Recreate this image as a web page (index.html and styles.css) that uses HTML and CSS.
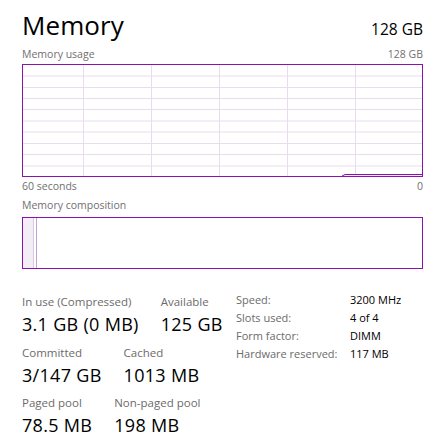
FILE: index.html
```html
<!DOCTYPE html>
<html>
<head>
<meta charset="utf-8">
<link rel="stylesheet" href="styles.css">
</head>
<body>
<div class="page">
  <div class="header">
    <div class="title">Memory</div>
    <div class="total">128 GB</div>
  </div>
  <div class="caption caption-usage">
    <span>Memory usage</span>
    <span>128 GB</span>
  </div>
  <div class="graph">
    <svg class="graph-svg" width="399" height="111" viewBox="0 0 399 111">
      <g stroke="#eadcef" stroke-width="1">
        <line x1="60.5" y1="0" x2="60.5" y2="111"/>
        <line x1="128.5" y1="0" x2="128.5" y2="111"/>
        <line x1="196.5" y1="0" x2="196.5" y2="111"/>
        <line x1="264.5" y1="0" x2="264.5" y2="111"/>
        <line x1="332.5" y1="0" x2="332.5" y2="111"/>
        <line x1="0" y1="11" x2="399" y2="11"/>
        <line x1="0" y1="22.5" x2="399" y2="22.5"/>
        <line x1="0" y1="33.5" x2="399" y2="33.5"/>
        <line x1="0" y1="44.5" x2="399" y2="44.5"/>
        <line x1="0" y1="56" x2="399" y2="56"/>
        <line x1="0" y1="67" x2="399" y2="67"/>
        <line x1="0" y1="78.5" x2="399" y2="78.5"/>
        <line x1="0" y1="89.5" x2="399" y2="89.5"/>
        <line x1="0" y1="101" x2="399" y2="101"/>
      </g>
      <polygon points="319,111 322,109.5 399,109.5 399,111" fill="#f1e7f5"/>
      <polyline points="319,111 322,109.5 399,109.5" fill="none" stroke="#8b12ae" stroke-width="1"/>
    </svg>
  </div>
  <div class="caption caption-time">
    <span>60 seconds</span>
    <span>0</span>
  </div>
  <div class="caption caption-comp">
    <span>Memory composition</span>
  </div>
  <div class="comp">
    <svg class="comp-svg" width="399" height="50" viewBox="0 0 399 50">
      <rect x="0" y="0" width="10.5" height="50" fill="#f3eef6"/>
      <line x1="10.5" y1="0" x2="10.5" y2="50" stroke="#dcc7e4" stroke-width="1"/>
      <line x1="13.5" y1="0" x2="13.5" y2="50" stroke="#c9a2d7" stroke-width="1"/>
    </svg>
  </div>
  <div class="stats">
    <div class="stats-left">
      <div class="stat-row">
        <div class="stat">
          <div class="stat-label">In use (Compressed)</div>
          <div class="stat-value">3.1 GB (0 MB)</div>
        </div>
        <div class="stat">
          <div class="stat-label">Available</div>
          <div class="stat-value">125 GB</div>
        </div>
      </div>
      <div class="stat-row">
        <div class="stat">
          <div class="stat-label">Committed</div>
          <div class="stat-value">3/147 GB</div>
        </div>
        <div class="stat">
          <div class="stat-label">Cached</div>
          <div class="stat-value">1013 MB</div>
        </div>
      </div>
      <div class="stat-row">
        <div class="stat">
          <div class="stat-label">Paged pool</div>
          <div class="stat-value">78.5 MB</div>
        </div>
        <div class="stat">
          <div class="stat-label">Non-paged pool</div>
          <div class="stat-value">198 MB</div>
        </div>
      </div>
    </div>
    <div class="stats-right">
      <div class="kv-label">Speed:</div><div class="kv-value">3200 MHz</div>
      <div class="kv-label">Slots used:</div><div class="kv-value">4 of 4</div>
      <div class="kv-label">Form factor:</div><div class="kv-value">DIMM</div>
      <div class="kv-label">Hardware reserved:</div><div class="kv-value">117 MB</div>
    </div>
  </div>
</div>
</body>
</html>
```

FILE: styles.css
```css
html, body {
  margin: 0;
  padding: 0;
  background: #ffffff;
}
body {
  font-family: "Open Sans", "Noto Sans", "DejaVu Sans", sans-serif;
  color: #000000;
}
.page {
  width: 401px;
  padding: 10px 12px 0 22px;
}
.header {
  display: flex;
  justify-content: space-between;
  align-items: baseline;
  height: 30px;
}
.title {
  font-size: 26px;
  line-height: 30px;
  letter-spacing: 0.1px;
}
.total {
  font-size: 15.5px;
  line-height: 30px;
}
.caption {
  display: flex;
  justify-content: space-between;
  font-size: 10.5px;
  line-height: 14px;
  color: #707070;
}
.caption-usage {
  margin-top: 7px;
}
.caption-time {
  margin-top: 2px;
}
.caption-comp {
  margin-top: 5px;
}
.graph {
  margin-top: 3px;
  height: 111px;
  border: 1px solid #8b12ae;
}
.graph-svg, .comp-svg {
  display: block;
}
.comp {
  margin-top: 5px;
  height: 50px;
  border: 1px solid #8b12ae;
}
.stats {
  display: grid;
  grid-template-columns: 214px 1fr;
  margin-top: 25px;
}
.stats-left {
  display: flex;
  flex-direction: column;
  gap: 9.5px;
}
.stat-row {
  display: flex;
  gap: 22px;
}
.stat-label {
  font-size: 11.5px;
  line-height: 16px;
  color: #6b6b6b;
  white-space: nowrap;
}
.stat-value {
  margin-top: 3px;
  font-size: 18px;
  line-height: 22px;
  letter-spacing: 0.3px;
  white-space: nowrap;
}
.stats-right {
  display: grid;
  grid-template-columns: 114px auto;
  grid-auto-rows: 18px;
  align-content: start;
  margin-top: -3px;
  font-size: 11px;
  line-height: 18px;
}
.kv-label {
  color: #6b6b6b;
  white-space: nowrap;
}
.kv-value {
  color: #000000;
  white-space: nowrap;
}
```
